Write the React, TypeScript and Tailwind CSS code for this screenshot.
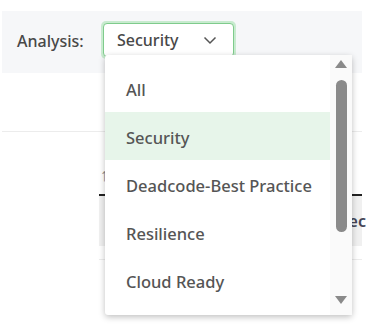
import React from "react";

const items = ["All", "Security", "Deadcode-Best Practice", "Resilience", "Cloud Ready"];

export default function App() {
  return (
    <div
      className="relative w-[371px] h-[327px] bg-white overflow-hidden"
      style={{ fontFamily: '"Noto Sans", "Open Sans", sans-serif' }}
    >
      <div className="pt-[11px] pl-[2px] w-[362px]">
        <div className="h-[62px] bg-[#f6f7f9] flex items-center pl-[15px]">
          <span className="w-[84px] text-[16px] font-medium text-[#484848] mt-[-3px]">Analysis:</span>
          <div className="mt-[-4px] w-[135px] h-[38px] rounded-[5px] bg-[#c8ebcf] p-[2px]">
            <div className="w-full h-full rounded-[4px] border border-[#7fcb8c] bg-white flex items-center justify-between pl-[13px] pr-[16px]">
              <span className="text-[16px] font-medium text-[#484848]">Security</span>
              <svg width="14" height="9" viewBox="0 0 14 9" fill="none">
                <path d="M1.5 1.5 L7 7 L12.5 1.5" stroke="#555" strokeWidth="1.5" />
              </svg>
            </div>
          </div>
        </div>
        <div className="h-[59px] border-b border-[#ececec]" />
        <div className="pl-[97px]">
          <div className="h-[62px] flex items-end pl-[1px]">
            <span className="text-[18px] text-[#888] leading-none mb-[11px]">↑</span>
          </div>
          <div className="h-[2px] bg-[#222]" />
          <div className="h-[50px] bg-[#f0f0f0] flex items-center justify-end">
            <span className="text-[16px] text-[#445] font-semibold mr-[-4px]">ec</span>
          </div>
          <div className="h-[14px] border-b border-[#ececec]" />
        </div>
      </div>

      <div className="absolute left-[105px] top-[55px] w-[247px] h-[260px] bg-white rounded-[3px] shadow-[0_2px_6px_rgba(0,0,0,0.25)] flex">
        <div className="flex-1 pt-[9px]">
          {items.map((it) => (
            <div
              key={it}
              className={`h-[48px] flex items-center pl-[21px] pt-[5px] text-[16.5px] font-medium text-[#555] ${
                it === "Security" ? "bg-[#e7f5ea]" : ""
              }`}
            >
              {it}
            </div>
          ))}
        </div>
        <div className="w-[22px] bg-[#fafafa] flex flex-col items-center">
          <svg className="mt-[5px]" width="12" height="8" viewBox="0 0 12 8">
            <path d="M0 8 L6 0 L12 8 Z" fill="#8a8a8a" />
          </svg>
          <div className="mt-[12px] w-[11px] h-[152px] rounded-full bg-[#8a8a8a]" />
          <div className="flex-1" />
          <svg className="mb-[11px]" width="12" height="8" viewBox="0 0 12 8">
            <path d="M0 0 L12 0 L6 8 Z" fill="#8a8a8a" />
          </svg>
        </div>
      </div>
    </div>
  );
}
